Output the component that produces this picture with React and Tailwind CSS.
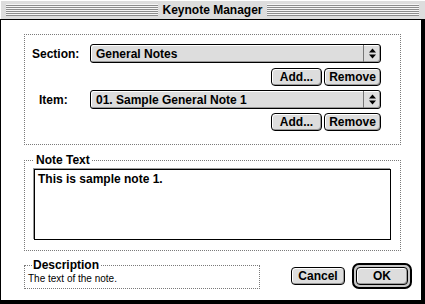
import React from "react";

const stripes =
  "bg-[repeating-linear-gradient(to_bottom,#f6f6f6_0px,#f6f6f6_1px,#8c8c8c_1px,#8c8c8c_2px)]";

function Arrows() {
  return (
    <svg width="7" height="11" viewBox="0 0 7 11">
      <path d="M3.5 0.5 L7 4.5 L0 4.5 Z" fill="#000" />
      <path d="M0 6.5 L7 6.5 L3.5 10.5 Z" fill="#000" />
    </svg>
  );
}

function Popup({ text }) {
  return (
    <div className="flex-1 h-[19px] flex items-stretch rounded-[3px] border border-black bg-[#dddddd] shadow-[inset_1px_1px_0_#ffffff,inset_-1px_-1px_0_#999999]">
      <div className="flex-1 flex items-center pl-[5px] text-[12px] font-bold leading-none">
        {text}
      </div>
      <div className="w-[17px] flex items-center justify-center border-l border-[#777777]">
        <Arrows />
      </div>
    </div>
  );
}

function Button({ children, w }) {
  return (
    <div
      className={`${w} h-[18px] flex items-center justify-center rounded-[4px] border border-black bg-[#dddddd] shadow-[inset_1px_1px_0_#ffffff,inset_-1px_-1px_0_#999999] text-[12px] font-bold leading-none`}
    >
      {children}
    </div>
  );
}

export default function App() {
  return (
    <div className="w-[425px] h-[304px] bg-white overflow-hidden text-black font-['Liberation_Sans',Arial,sans-serif]">
      <div className="h-[304px] flex flex-col">
        {/* Barra de título */}
        <div className="h-[20px] bg-[#dddddd] border-b border-black flex items-center px-[6px] gap-[4px] shadow-[inset_1px_1px_0_#ffffff]">
          <div className={`flex-1 h-[12px] ${stripes}`} />
          <span className="text-[12px] font-bold leading-none">Keynote Manager</span>
          <div className={`flex-1 h-[12px] ${stripes}`} />
        </div>

        {/* Cuerpo */}
        <div className="flex-1 border-l border-r-[4px] border-b-[4px] border-black pl-[23px] pt-[14px]">
          {/* Section / Item */}
          <div className="w-[377px] h-[111px] border border-dotted border-[#7a7a7a] pt-[9px] pl-[7px] pr-[19px]">
            <div className="flex items-center">
              <div className="w-[58px] text-[12px] font-bold leading-none">Section:</div>
              <Popup text="General Notes" />
            </div>
            <div className="mt-[5px] flex justify-end gap-[2px]">
              <Button w="w-[51px]">Add...</Button>
              <Button w="w-[57px]">Remove</Button>
            </div>
            <div className="mt-[4px] flex items-center">
              <div className="w-[58px] pl-[7px] text-[12px] font-bold leading-none">Item:</div>
              <Popup text="01. Sample General Note 1" />
            </div>
            <div className="mt-[4px] flex justify-end gap-[2px]">
              <Button w="w-[51px]">Add...</Button>
              <Button w="w-[57px]">Remove</Button>
            </div>
          </div>

          {/* Note Text */}
          <div className="relative mt-[15px] w-[377px] h-[91px] border border-dotted border-[#7a7a7a] pt-[8px] pl-[9px]">
            <span className="absolute top-[-8px] left-[9px] bg-white px-[2px] text-[12px] font-bold leading-[14px]">
              Note Text
            </span>
            <div className="w-[357px] h-[71px] border border-black bg-white shadow-[-1px_-1px_0_#999999,1px_1px_0_#ffffff] pl-[3px] pt-[2px] text-[12px] font-bold leading-[14px]">
              This is sample note 1.
            </div>
          </div>

          {/* Fila inferior */}
          <div className="mt-[12px] flex items-start">
            <div className="relative mt-[2px] w-[236px] h-[24px] border border-dotted border-[#7a7a7a] pl-[3px] pt-[7px]">
              <span className="absolute top-[-8px] left-[7px] bg-white px-[1px] text-[12px] font-bold leading-[14px]">
                Description
              </span>
              <div className="text-[10px] leading-[11px]">The text of the note.</div>
            </div>
            <div className="ml-[31px] mt-[4px]">
              <Button w="w-[54px]">Cancel</Button>
            </div>
            <div className="ml-[7px] w-[60px] h-[26px] rounded-[7px] border-[2px] border-black bg-[#c8c8c8] p-[2px]">
              <Button w="w-full">OK</Button>
            </div>
          </div>
        </div>
      </div>
    </div>
  );
}
